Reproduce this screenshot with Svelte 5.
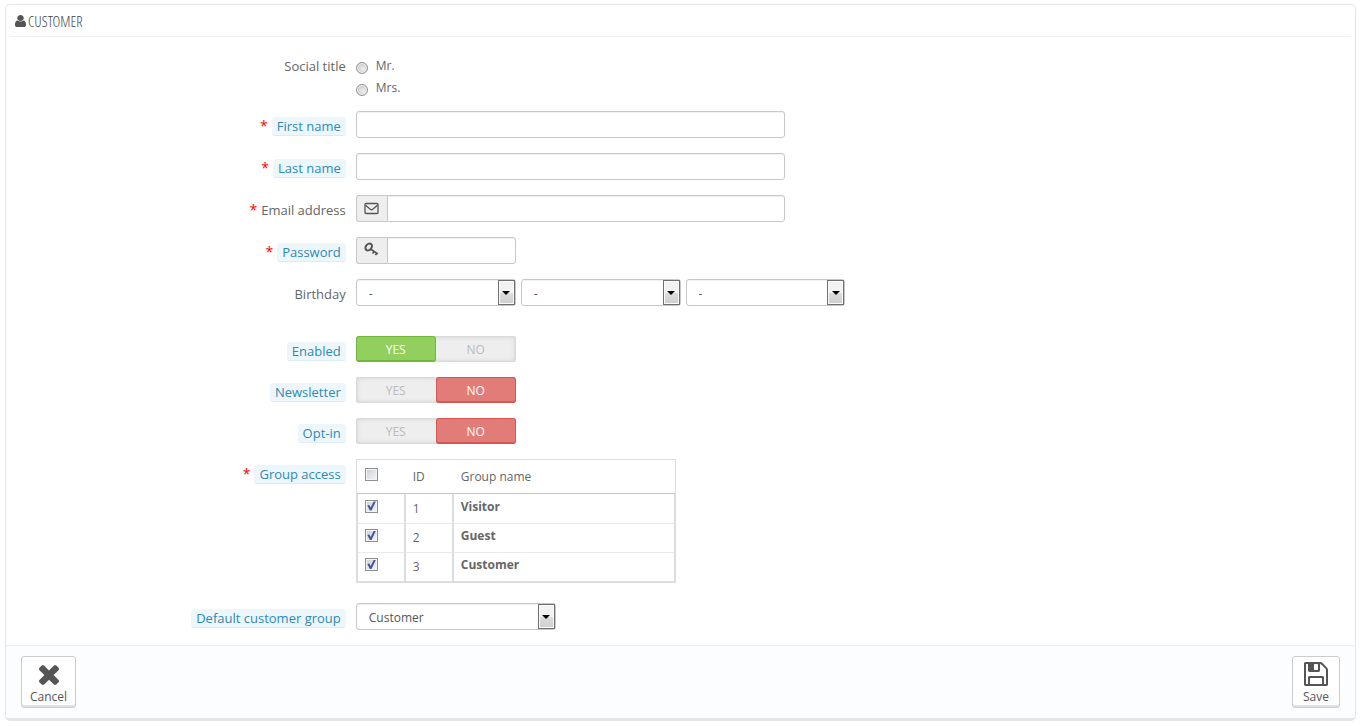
<script>
  let socialTitle = $state('');
  let firstName = $state('');
  let lastName = $state('');
  let email = $state('');
  let password = $state('');
  let defaultGroup = $state('Customer');

  let birthday = $state({ day: '-', month: '-', year: '-' });
  const days = Array.from({ length: 31 }, (_, i) => i + 1);
  const months = ['January', 'February', 'March', 'April', 'May', 'June', 'July', 'August', 'September', 'October', 'November', 'December'];
  const years = Array.from({ length: 100 }, (_, i) => 2014 - i);
  const birthdayParts = [
    { key: 'day', options: days },
    { key: 'month', options: months },
    { key: 'year', options: years }
  ];

  let switches = $state([
    { id: 'enabled', label: 'Enabled', value: 'yes' },
    { id: 'newsletter', label: 'Newsletter', value: 'no' },
    { id: 'optin', label: 'Opt-in', value: 'no' }
  ]);

  let groups = $state([
    { id: 1, name: 'Visitor', checked: true },
    { id: 2, name: 'Guest', checked: true },
    { id: 3, name: 'Customer', checked: true }
  ]);

  function toggleAll(event) {
    for (const group of groups) group.checked = event.currentTarget.checked;
  }
</script>

<form class="panel" onsubmit={(e) => e.preventDefault()}>
  <h3 class="heading">
    <svg class="user" viewBox="256 128 1280 1536" preserveAspectRatio="none" aria-hidden="true"><path d="M1536 1399q0 109-62.5 187t-150.5 78h-854q-88 0-150.5-78t-62.5-187q0-85 8.500-160.500t31.500-152 58.500-131 94-89 134.500-34.500q131 128 313 128t313-128q76 0 134.500 34.500t94 89 58.500 131 31.500 152 8.500 160.500zm-256-887q0 159-112.500 271.500t-271.500 112.500-271.500-112.500-112.500-271.500 112.500-271.500 271.500-112.500 271.500 112.500 112.500 271.500z" /></svg>
    CUSTOMER
  </h3>

  <div class="body">
    <div class="row" role="radiogroup" aria-labelledby="title-label">
      <div class="name first" id="title-label">Social title</div>
      <div class="control radios">
        {#each ['Mr.', 'Mrs.'] as title}
          <label class="radio"><input type="radio" name="title" value={title} bind:group={socialTitle} /><span>{title}</span></label>
        {/each}
      </div>
    </div>

    <div class="row">
      <label class="name required" for="firstname"><span class="hint">First name</span></label>
      <div class="control"><input class="text wide" id="firstname" type="text" bind:value={firstName} /></div>
    </div>

    <div class="row">
      <label class="name required" for="lastname"><span class="hint">Last name</span></label>
      <div class="control"><input class="text wide" id="lastname" type="text" bind:value={lastName} /></div>
    </div>

    <div class="row">
      <label class="name required" for="email"><span>Email address</span></label>
      <div class="control">
        <div class="group wide">
          <span class="addon">
            <svg width="15" height="13" viewBox="0 0 15 13" fill="none" stroke="#555" aria-hidden="true"><rect x="1" y="1.500" width="13" height="10" rx="1" stroke-width="1.300" /><path d="M1.500 3.200 6.300 7.300Q7.500 8.200 8.700 7.300L13.500 3.200" stroke-width="1.300" /></svg>
          </span>
          <input class="text" id="email" type="email" bind:value={email} />
        </div>
      </div>
    </div>

    <div class="row">
      <label class="name required" for="password"><span class="hint">Password</span></label>
      <div class="control columns">
        <div class="group">
          <span class="addon">
            <svg width="15" height="17" viewBox="0 0 15 17" fill="none" stroke="#555" aria-hidden="true"><ellipse cx="4.700" cy="5" rx="3.800" ry="2.800" transform="rotate(-50 4.700 5)" stroke-width="2" /><path d="M6.500 7 13.800 12M10 9.500 8.600 11.600M12.700 11.200 11.500 13.200" stroke-width="1.600" /></svg>
          </span>
          <input class="text" id="password" type="password" bind:value={password} />
        </div>
      </div>
    </div>

    <div class="row birthday" role="group" aria-labelledby="birthday-label">
      <div class="name" id="birthday-label"><span>Birthday</span></div>
      <div class="control columns">
        {#each birthdayParts as part}
          <div class="select">
            <select aria-label={part.key} bind:value={birthday[part.key]}>
              <option value="-">-</option>
              {#each part.options as option}<option value={option}>{option}</option>{/each}
            </select>
            <span class="arrow"></span>
          </div>
        {/each}
      </div>
    </div>

    {#each switches as item}
      <div class="row" role="radiogroup" aria-labelledby="{item.id}-label">
        <div class="name" id="{item.id}-label"><span class="hint">{item.label}</span></div>
        <div class="control columns">
          <div class="switch">
            <label class="yes"><input type="radio" name={item.id} value="yes" bind:group={item.value} /><span>YES</span></label>
            <label class="no"><input type="radio" name={item.id} value="no" bind:group={item.value} /><span>NO</span></label>
          </div>
        </div>
      </div>
    {/each}

    <div class="row access">
      <div class="name required" id="access-label"><span class="hint">Group access</span></div>
      <div class="control">
        <table aria-labelledby="access-label">
          <thead>
            <tr>
              <th class="narrow"><input type="checkbox" aria-label="Select all groups" onchange={toggleAll} /></th>
              <th class="narrow">ID</th>
              <th>Group name</th>
            </tr>
          </thead>
          <tbody>
            {#each groups as group}
              <tr>
                <td><input type="checkbox" id="group-{group.id}" bind:checked={group.checked} /></td>
                <td class="id">{group.id}</td>
                <td><label for="group-{group.id}">{group.name}</label></td>
              </tr>
            {/each}
          </tbody>
        </table>
      </div>
    </div>

    <div class="row">
      <label class="name" for="default-group"><span class="hint">Default customer group</span></label>
      <div class="control">
        <div class="select medium">
          <select id="default-group" bind:value={defaultGroup}>
            {#each groups as group}<option value={group.name}>{group.name}</option>{/each}
          </select>
          <span class="arrow"></span>
        </div>
      </div>
    </div>
  </div>

  <div class="footer">
    <button type="button">
      <svg class="cross" viewBox="302 238 1188 1316" aria-hidden="true"><path d="M1490 1322q0 40-28 68l-136 136q-28 28-68 28t-68-28l-294-294-294 294q-28 28-68 28t-68-28l-136-136q-28-28-28-68t28-68l294-294-294-294q-28-28-28-68t28-68l136-136q28-28 68-28t68 28l294 294 294-294q28-28 68-28t68 28l136 136q28 28 28 68t-28 68l-294 294 294 294q28 28 28 68z" /></svg>
      Cancel
    </button>
    <button type="submit">
      <svg class="disk" viewBox="128 128 1536 1536" aria-hidden="true"><path d="M512 1536h768v-384h-768v384zm896 0h128v-896q0-14-10-38.500t-20-34.500l-281-281q-10-10-34-20t-39-10v416q0 40-28 68t-68 28h-576q-40 0-68-28t-28-68v-416h-128v1280h128v-416q0-40 28-68t68-28h832q40 0 68 28t28 68v416zm-384-928v-320q0-13-9.500-22.500t-22.500-9.500h-192q-13 0-22.500 9.500t-9.500 22.500v320q0 13 9.500 22.500t22.500 9.500h192q13 0 22.500-9.500t9.500-22.500zm640 32v928q0 40-28 68t-68 28h-1344q-40 0-68-28t-28-68v-1344q0-40 28-68t68-28h928q40 0 88 20t76 48l280 280q28 28 48 76t20 88z" /></svg>
      Save
    </button>
  </div>
</form>

<style>
  :global(body) {
    background: #fff;
    color: #666;
    font: 12px/18px "Open Sans", sans-serif;
  }
  :global(#app) { display: flow-root; }

  .panel, .panel * { box-sizing: border-box; }
  .panel {
    margin: 4px 4px 4px 5px;
    border: 1px solid #e6e6e6;
    border-bottom: 3px solid #e3e5e7;
    border-radius: 5px;
    overflow: hidden;
  }

  .heading {
    display: flex;
    align-items: center;
    gap: 2px;
    height: 32px;
    margin: 0 4px;
    padding-left: 5px;
    border-bottom: 1px solid #eee;
    color: #444;
    font: 300 15px/18px "Ubuntu Condensed", "Open Sans Condensed Light", "Open Sans Condensed", sans-serif;
  }
  .user { width: 11px; height: 12px; fill: #555; }

  .body { padding: 18px 15px 15px; }
  .row { display: flex; margin-bottom: 15px; }
  .row:last-child { margin-bottom: 0; }
  .row:first-child { margin-bottom: 12px; }
  .birthday { margin-bottom: 30px; }
  .access { margin-bottom: 20px; }

  .name {
    display: flex;
    justify-content: flex-end;
    align-items: flex-start;
    width: 25%;
    padding: 6px 5px 0 0;
    font-size: 13px;
    line-height: 18px;
  }
  .name.first { padding-top: 2px; }
  .required::before {
    content: "*";
    margin-right: 4px;
    color: #f00;
    font-size: 14px;
  }
  .hint {
    padding: 0 5px;
    border-bottom: 1px solid #d8edf7;
    border-radius: 3px;
    background: #edf7fb;
    color: #2f89b3;
  }

  .control { flex: 1; min-width: 0; padding-left: 5px; }
  .columns { display: grid; grid-template-columns: repeat(6, minmax(0, 1fr)); gap: 5px; }
  .wide { width: 43.6%; }
  .medium { width: 200px; }

  .radio { display: flex; gap: 8px; height: 22px; width: max-content; line-height: 22px; }
  .radio input {
    appearance: none;
    width: 12px;
    height: 12px;
    margin: 7px 0 0;
    border: 1px solid #909090;
    border-radius: 50%;
    background: radial-gradient(circle at 60% 60%, #eee, #b9bcc0);
    box-shadow: inset 0 0 0 1px #f4f4f4;
  }
  .radio input:checked { background: radial-gradient(circle, #3c5aa0 30%, #eee 40%); }

  .text {
    display: block;
    height: 27px;
    padding: 4px 8px;
    border: 1px solid #c7c7c7;
    border-radius: 3px;
    background: #fff;
    box-shadow: inset 0 1px 1px #f0f0f0;
    color: #555;
    font: 12px/18px "Open Sans", sans-serif;
  }
  .group { display: flex; }
  .group .text { flex: 1; width: 0; border-radius: 0 3px 3px 0; }
  .addon {
    display: flex;
    align-items: center;
    justify-content: center;
    width: 31px;
    border: 1px solid #c7c7c7;
    border-right: 0;
    border-radius: 3px 0 0 3px;
    background: #eee;
  }

  .select { position: relative; height: 27px; }
  select {
    appearance: none;
    display: block;
    width: 100%;
    height: 27px;
    padding: 2px 24px 0 12px;
    border: 1px solid #c7c7c7;
    border-radius: 3px;
    background: #fff;
    box-shadow: inset 0 1px 1px #f0f0f0;
    color: #555;
    font: 12px/18px "Open Sans", sans-serif;
  }
  .arrow {
    position: absolute;
    top: 1px;
    right: 1px;
    bottom: 1px;
    display: grid;
    place-items: center;
    width: 17px;
    border: 1px solid #707070;
    background: linear-gradient(#f2f2f2 50%, #ddd 50%, #cfcfcf);
    box-shadow: inset 0 0 0 1px #fafafa;
    pointer-events: none;
  }
  .arrow::before {
    content: "";
    border: 4px solid transparent;
    border-top-color: #000;
    border-bottom: 0;
  }

  .switch {
    display: grid;
    grid-template-columns: 1fr 1fr;
    height: 26px;
    border-radius: 3px;
    background: #eee;
    box-shadow: inset 0 0 0 1px #dadada, inset 0 0 4px 1px #d2d2d2;
    color: #bbb;
  }
  .switch label { position: relative; display: grid; }
  .switch input { position: absolute; opacity: 0; margin: 0; }
  .switch span {
    display: grid;
    place-items: center;
    border: 1px solid transparent;
    border-bottom-width: 2px;
    border-radius: 3px;
    padding-top: 2px;
  }
  .switch input:checked + span { color: #fff; }
  .yes input:checked + span { border-color: #72b838; background: #92cf5f; }
  .no input:checked + span { border-color: #d9534f; background: #e27c79; }

  table {
    width: 320px;
    border: 1px solid #ddd;
    border-spacing: 0;
    table-layout: fixed;
  }
  th {
    height: 34px;
    padding: 0 9px;
    border-bottom: 1px solid #a0d0eb;
    font-weight: 400;
    text-align: left;
  }
  .narrow { width: 48px; }
  th:first-child { width: 47px; padding: 0 8px 4px; }
  td {
    height: 29px;
    padding: 0 7px 4px;
    border-left: 2px solid #ddd;
    border-bottom: 1px solid #eaeaea;
  }
  td:first-child { border-left-width: 1px; padding-bottom: 5px; }
  td:last-child { border-right: 1px solid #ddd; }
  tbody tr:first-child td { height: 30px; }
  tbody tr:last-child td { border-bottom-color: #ddd; }
  td.id { padding: 0 7px; }
  td label { font-weight: 700; }
  input[type="checkbox"] {
    appearance: none;
    display: block;
    width: 13px;
    height: 13px;
    margin: 0;
    border: 1px solid #8e8f8f;
    background: linear-gradient(135deg, #cbcfd5, #f6f6f6);
    box-shadow: inset 0 0 0 1px #f4f4f4;
  }
  input[type="checkbox"]:checked::before {
    content: "";
    display: block;
    width: 11px;
    height: 11px;
    background: #40559c;
    clip-path: polygon(14% 45%, 32% 42%, 45% 63%, 72% 10%, 91% 10%, 52% 91%, 38% 91%);
  }

  .footer {
    display: flex;
    justify-content: space-between;
    padding: 10px 15px;
    border-top: 1px solid #eee;
    background: #fcfdfe;
  }
  button {
    display: flex;
    flex-direction: column;
    align-items: center;
    justify-content: space-between;
    min-width: 48px;
    height: 52px;
    padding: 4px 8px 1px;
    border: 1px solid #ccc;
    border-radius: 3px;
    background: #fff;
    box-shadow: inset 0 -2px 0 #e2e2e2;
    color: #555;
    font: 12px/18px "Open Sans", sans-serif;
  }
  button svg { height: 26px; fill: #555; }
  .cross { width: 20px; }
  .disk { width: 24px; }
</style>
